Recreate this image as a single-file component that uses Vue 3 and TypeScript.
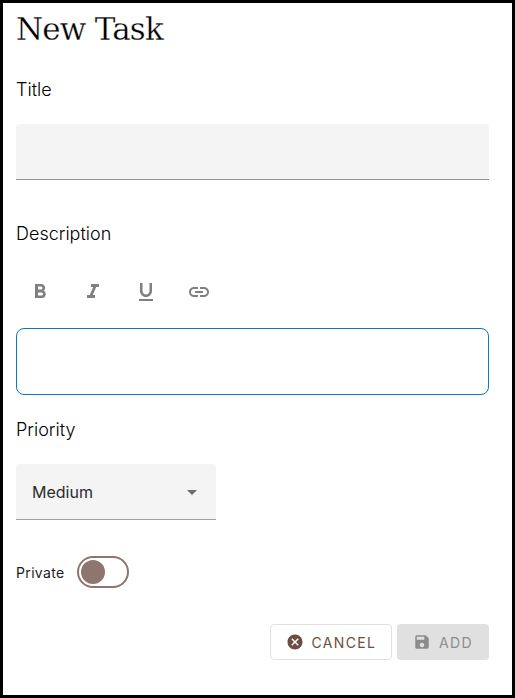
<script setup lang="ts">
import { ref } from 'vue'

interface FormatTool {
  name: string
  path: string
}

const tools: FormatTool[] = [
  { name: 'Bold', path: 'M15.6 10.79c.97-.67 1.65-1.77 1.65-2.79 0-2.26-1.75-4-4-4H7v14h7.04c2.09 0 3.71-1.7 3.71-3.79 0-1.52-.86-2.82-2.15-3.42zM10 6.5h3c.83 0 1.5.67 1.5 1.5s-.67 1.5-1.5 1.5h-3v-3zm3.5 9H10v-3h3.5c.83 0 1.5.67 1.5 1.5s-.67 1.5-1.5 1.5z' },
  { name: 'Italic', path: 'M10 4v3h2.21l-3.42 8H6v3h8v-3h-2.21l3.42-8H18V4z' },
  { name: 'Underline', path: 'M12 17c3.31 0 6-2.69 6-6V3h-2.5v8c0 1.93-1.57 3.5-3.5 3.5S8.5 12.93 8.5 11V3H6v8c0 3.31 2.69 6 6 6zm-7 2v2h14v-2H5z' },
  { name: 'Link', path: 'M3.9 12c0-1.71 1.39-3.1 3.1-3.1h4V7H7c-2.76 0-5 2.24-5 5s2.24 5 5 5h4v-1.9H7c-1.71 0-3.1-1.39-3.1-3.1zM8 13h8v-2H8v2zm9-6h-4v1.9h4c1.71 0 3.1 1.39 3.1 3.1s-1.39 3.1-3.1 3.1h-4V17h4c2.76 0 5-2.24 5-5s-2.24-5-5-5z' },
]

const title = ref('')
const priority = ref('Medium')
const isPrivate = ref(false)
</script>

<template>
  <form class="dialog" @submit.prevent>
    <h1 class="heading">New Task</h1>
    <label class="label" for="title">Title</label>
    <input id="title" v-model="title" class="field" type="text" />
    <div class="label description-label">Description</div>
    <div class="toolbar">
      <button v-for="tool in tools" :key="tool.name" type="button" class="tool">
        <svg viewBox="0 0 24 24"><path :d="tool.path" /></svg>
      </button>
    </div>
    <div class="editor" contenteditable="true"></div>
    <div class="label priority-label">Priority</div>
    <div class="select">
      <span>{{ priority }}</span>
      <svg viewBox="0 0 10 5"><path d="M0 0h10L5 5z" /></svg>
    </div>
    <div class="private">
      <span>Private</span>
      <button type="button" class="switch" :class="{ on: isPrivate }" @click="isPrivate = !isPrivate">
        <span class="thumb"></span>
      </button>
    </div>
    <div class="actions">
      <button type="button" class="button cancel">
        <svg viewBox="0 0 24 24"><path d="M12 2C6.47 2 2 6.47 2 12s4.47 10 10 10 10-4.47 10-10S17.53 2 12 2zm5 13.59L15.59 17 12 13.41 8.41 17 7 15.59 10.59 12 7 8.41 8.41 7 12 10.59 15.59 7 17 8.41 13.41 12 17 15.59z" /></svg>
        <span>CANCEL</span>
      </button>
      <button type="submit" class="button add" disabled>
        <svg viewBox="0 0 24 24"><path d="M17 3H5c-1.11 0-2 .9-2 2v14c0 1.1.89 2 2 2h14c1.1 0 2-.9 2-2V7l-4-4zm-5 16c-1.66 0-3-1.34-3-3s1.34-3 3-3 3 1.34 3 3-1.34 3-3 3zm3-10H5V5h10v4z" /></svg>
        <span>ADD</span>
      </button>
    </div>
  </form>
</template>

<style>
body { background: #fff; }
</style>

<style scoped>
* { box-sizing: border-box; }
.dialog {
  width: 515px;
  height: 698px;
  border: 3px solid #000;
  padding: 0 23px 0 13px;
  display: flex;
  flex-direction: column;
  font-family: Inter, sans-serif;
  color: #000;
  overflow: hidden;
}
button { font: inherit; padding: 0; margin: 0; }
.heading {
  margin: 5px 0 0;
  height: 42px;
  font: 400 31px/42px "Roboto Slab", "DejaVu Serif", serif;
  letter-spacing: -0.8px;
  -webkit-text-stroke: 0.3px #fff;
}
.label {
  margin-top: 27px;
  height: 26px;
  font-size: 18px;
  line-height: 26px;
  font-weight: 300;
}
.field {
  margin: 21px 0 0;
  width: 473px;
  height: 56px;
  padding: 0 16px;
  border: 0;
  border-bottom: 1px solid #949494;
  border-radius: 4px 4px 0 0;
  background: #f4f4f4;
  outline: none;
}
.description-label { margin-top: 41px; }
.toolbar {
  display: flex;
  gap: 5px;
  height: 48px;
  margin-top: 21px;
}
.tool {
  width: 48px;
  border: 0;
  background: none;
  display: grid;
  place-items: center;
}
.tool svg { width: 24px; height: 24px; fill: #808080; }
.editor {
  height: 67px;
  margin-top: 12px;
  border: 1px solid #0b78bc;
  border-radius: 8px;
  outline: none;
}
.priority-label { margin-top: 22px; }
.select {
  width: 200px;
  height: 56px;
  margin-top: 21px;
  padding: 0 19px 0 16px;
  display: flex;
  align-items: center;
  justify-content: space-between;
  background: #f4f4f4;
  border-bottom: 1px solid #a2a2a2;
  border-radius: 4px 4px 0 0;
  font-size: 16px;
  color: #2c2c2c;
}
.select svg { width: 10px; height: 5px; margin-top: 1px; fill: #6c6c6c; }
.private {
  margin-top: 36px;
  height: 32px;
  display: flex;
  align-items: center;
  gap: 12px;
  font-size: 14px;
  color: #1c1c1c;
}
.private > span { width: 49px; letter-spacing: 0.35px; }
.switch {
  width: 52px;
  height: 32px;
  border: 2px solid #8d7670;
  border-radius: 16px;
  background: #fff;
  padding: 0 2px;
  display: flex;
  align-items: center;
}
.switch.on { justify-content: flex-end; }
.thumb { width: 24px; height: 24px; border-radius: 50%; background: #8d7670; }
.actions {
  margin-top: 36px;
  display: flex;
  justify-content: flex-end;
  gap: 5px;
}
.button {
  height: 36px;
  display: flex;
  align-items: center;
  border: 0;
  border-radius: 4px;
  font-size: 14px;
  font-weight: 400;
  letter-spacing: 1.35px;
}
.button svg { width: 18px; height: 18px; fill: currentColor; margin-right: 8px; }
.cancel { width: 122px; padding-left: 14.5px; border: 1px solid #e0e0e0; background: #fff; color: #6d4c41; }
.add { width: 92px; padding-left: 16px; background: #e0e0e0; color: #8c8c8c; }
</style>
